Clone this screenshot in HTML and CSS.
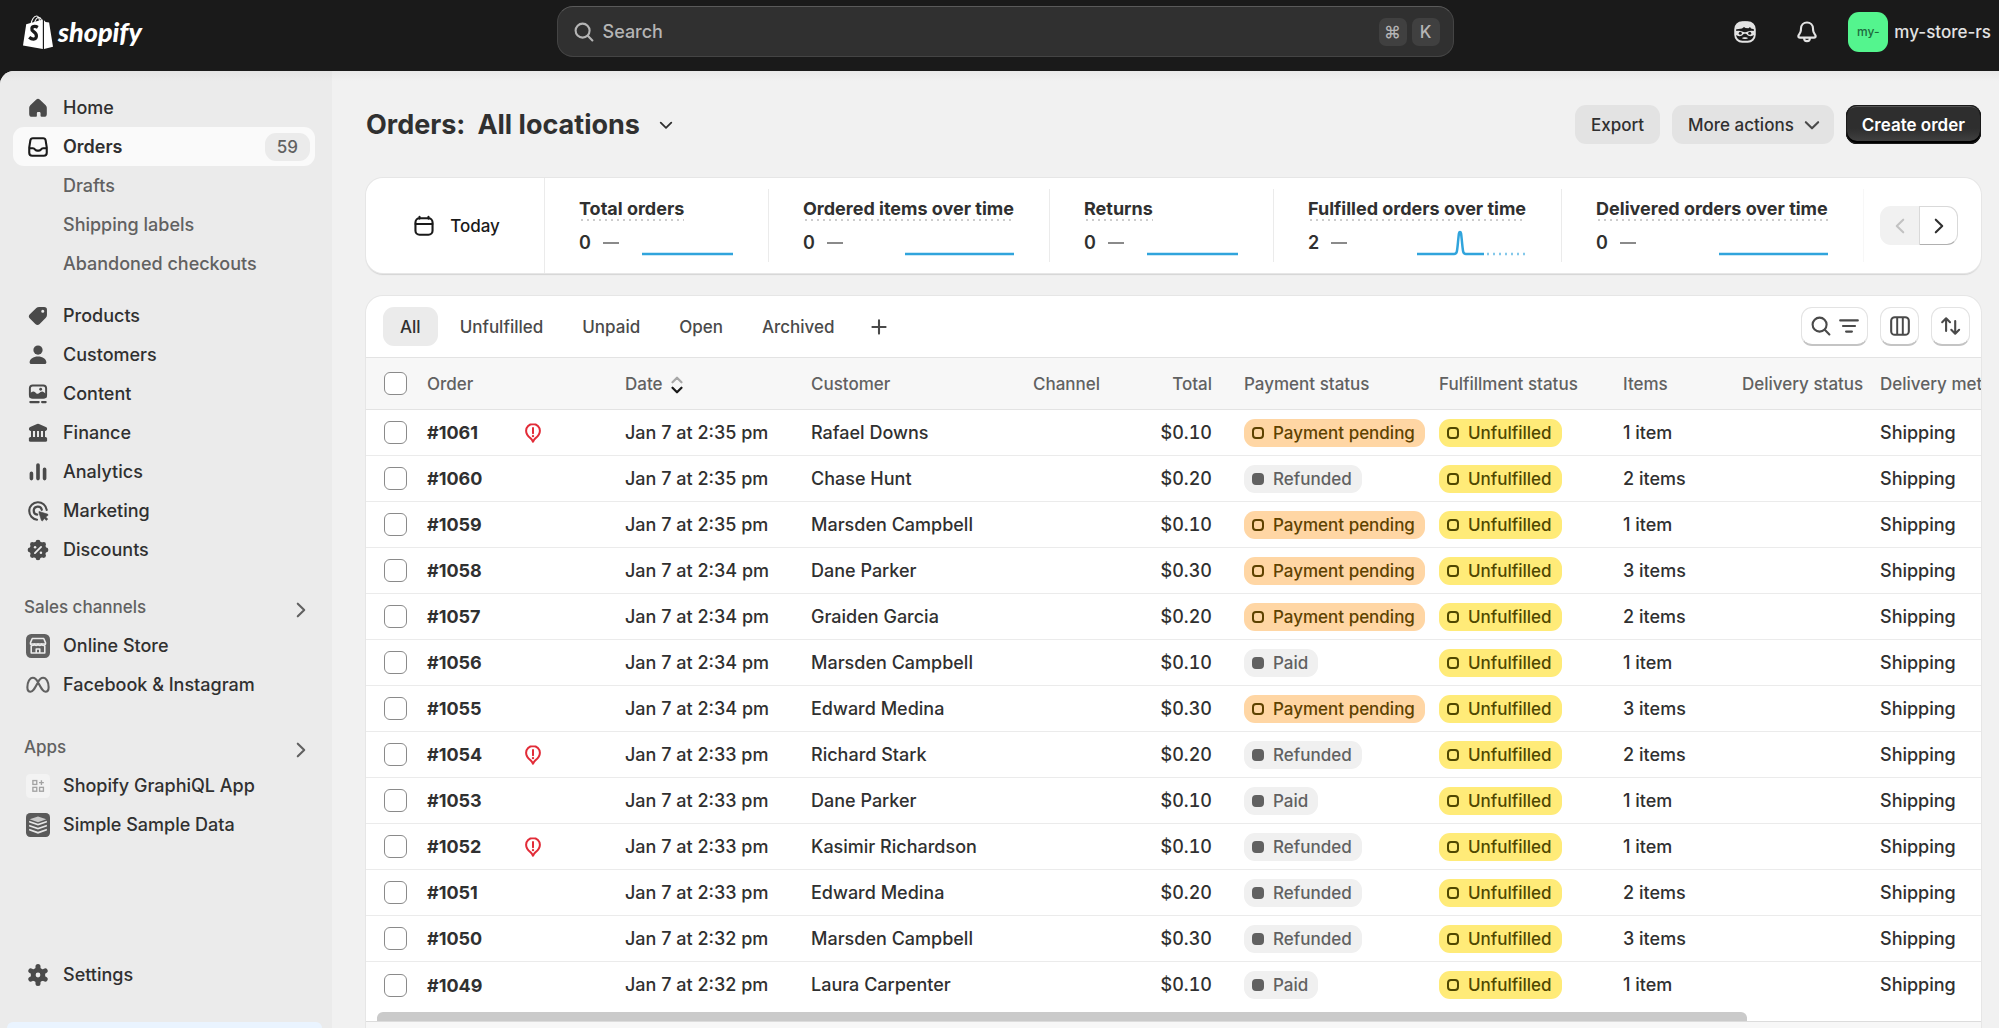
FILE: index.html
```html
<!DOCTYPE html>
<html lang="en">
<head>
<meta charset="utf-8">
<meta name="viewport" content="width=device-width, initial-scale=1">
<title>Orders</title>
<link rel="stylesheet" href="styles.css">
</head>
<body>
<svg class="sprite" aria-hidden="true">
  <symbol id="i-home" viewBox="0 0 20 20"><path d="M8.8 4a1.7 1.7 0 0 1 2.4 0l4.3 4.1c.5.5.8 1.1.8 1.8v4.3a2.1 2.1 0 0 1-2.1 2.1h-1.6a.8.8 0 0 1-.8-.8v-1.9c0-.5-.4-.8-.8-.8h-.9c-.5 0-.9.3-.9.8v1.9c0 .5-.3.8-.8.8H5.8a2.1 2.1 0 0 1-2.1-2.1V9.9c0-.7.3-1.3.8-1.8z" fill="currentColor"/></symbol>
  <symbol id="i-orders" viewBox="0 0 20 20"><path d="M6.4 3.75h7.2c.9 0 1.7.6 1.85 1.5l.8 5v3.9a2.1 2.1 0 0 1-2.1 2.1h-8.3a2.1 2.1 0 0 1-2.1-2.1v-3.9l.8-5c.15-.9.95-1.5 1.85-1.5zM4 10.9h2.4c.7 0 1.1.3 1.4.8.4.6.8.9 1.5.9h1.4c.7 0 1.1-.3 1.5-.9.3-.5.7-.8 1.4-.8H16" fill="none" stroke="currentColor" stroke-width="1.500" stroke-linejoin="round"/></symbol>
  <symbol id="i-tag" viewBox="0 0 20 20"><path fill-rule="evenodd" d="M10.8 3.5h3.6a2 2 0 0 1 2 2v3.7c0 .8-.3 1.5-.8 2l-4.4 4.5a2.2 2.2 0 0 1-3.1 0l-3.9-3.9a2.2 2.2 0 0 1 0-3.1l4.6-4.4c.5-.5 1.2-.8 2-.8zm2.6 2a1.1 1.1 0 1 0 0 2.2 1.1 1.1 0 0 0 0-2.2z" fill="currentColor"/></symbol>
  <symbol id="i-person" viewBox="0 0 20 20"><circle cx="10" cy="6.5" r="3.3" fill="currentColor"/><path d="M4 15.2C4 12.8 6.7 11 10 11s6 1.8 6 4.2c0 .8-.5 1.3-1.2 1.3H5.2c-.7 0-1.2-.5-1.2-1.3z" fill="currentColor"/></symbol>
  <symbol id="i-content" viewBox="0 0 20 20"><rect x="4.2" y="3.9" width="11.6" height="8.8" rx="2" fill="none" stroke="currentColor" stroke-width="1.4"/><path d="M4 10.2c1-1.7 2.6-2.7 4-1.5 1 1 1.5 1.6 2.6.8 1.2-.9 2.2-1.900 3.6-.8l1.800 1.500v2.500H4z" fill="currentColor"/><circle cx="11.9" cy="6.6" r="1" fill="currentColor"/><path d="M4.500 15.800h6M12.900 15.800h2.600" stroke="currentColor" stroke-width="1.500" stroke-linecap="round"/></symbol>
  <symbol id="i-bank" viewBox="0 0 20 20"><path d="M9.300 3.500a1.600 1.600 0 0 1 1.400 0l4.900 2.300c.6.300.9.800.9 1.400 0 .8-.6 1.300-1.300 1.300H4.800c-.7 0-1.300-.5-1.300-1.300 0-.6.300-1.100.9-1.400z" fill="currentColor"/><path d="M5.700 8v5.500M8.600 8v5.500M11.400 8v5.500M14.300 8v5.500" stroke="currentColor" stroke-width="1.400"/><rect x="3.500" y="12.900" width="13" height="3.300" rx="1.100" fill="currentColor"/></symbol>
  <symbol id="i-bars" viewBox="0 0 20 20"><path d="M5.300 11v3.700M10 5v9.700M14.700 8v6.700" stroke="currentColor" stroke-width="2.600" stroke-linecap="round"/></symbol>
  <symbol id="i-target" viewBox="0 0 20 20"><path d="M16.200 9.200a6.250 6.250 0 1 0-6.900 7" fill="none" stroke="currentColor" stroke-width="1.500" stroke-linecap="round"/><path d="M12.700 9.100a2.900 2.900 0 1 0-3.300 3.500" fill="none" stroke="currentColor" stroke-width="1.600" stroke-linecap="round"/><path d="M10.700 10.300l6 1.900c.6.200.6.900.1 1.200l-1.300.8 1.500 1.600-1 1-1.600-1.500-.8 1.400c-.3.500-1 .4-1.200-.1l-1.700-5.300z" fill="currentColor" stroke="currentColor" stroke-width=".4"/></symbol>
  <symbol id="i-discount" viewBox="0 0 20 20"><g fill="currentColor"><circle cx="10" cy="10" r="6"/><circle cx="10" cy="4.300" r="1.700"/><circle cx="10" cy="15.700" r="1.700"/><circle cx="4.300" cy="10" r="1.700"/><circle cx="15.700" cy="10" r="1.700"/><circle cx="6" cy="6" r="1.700"/><circle cx="14" cy="6" r="1.700"/><circle cx="6" cy="14" r="1.700"/><circle cx="14" cy="14" r="1.700"/></g><path d="M12.200 7.800l-4.400 4.400" stroke="#ebebeb" stroke-width="1.300" stroke-linecap="round"/><circle cx="7.900" cy="8.100" r=".9" fill="#ebebeb"/><circle cx="12.100" cy="11.900" r=".9" fill="#ebebeb"/></symbol>
  <symbol id="i-gear" viewBox="0 0 20 20"><circle cx="10" cy="10" r="5.200" fill="currentColor"/><path d="M10 4v12M4.900 7l10.200 6M4.900 13l10.200-6" stroke="currentColor" stroke-width="3.600" stroke-linecap="round"/><circle cx="10" cy="10" r="1.700" fill="#ebebeb"/></symbol>
  <symbol id="i-store" viewBox="0 0 23 23"><rect width="23" height="23" rx="5" fill="#616161"/><g fill="none" stroke="#ebebeb" stroke-width="1.500" stroke-linejoin="round"><path d="M6 4.300h11l1.700 4v1.300H4.300V8.300z"/><path d="M5 11.500v6.700h13v-6.700M9.800 18v-3.700h3.400V18"/><path d="M4.500 9.600c.2 1.900 3.200 1.900 3.500 0 .4 1.900 3.100 1.900 3.500 0 .4 1.900 3.100 1.900 3.500 0 .3 1.900 3.300 1.900 3.500 0"/></g></symbol>
  <symbol id="i-meta" viewBox="0 0 23 23"><path d="M11.500 8.800C10 6 8.600 4.500 6.600 4.500c-3 0-5.300 4.300-5.300 9.100 0 2.800 1.200 4.300 3.100 4.300 2.400 0 3.600-2.500 7.100-9.100 1.300-2.600 2.700-4.300 4.900-4.300 3 0 5.300 4.300 5.300 9.100 0 2.800-1.200 4.300-3.100 4.300-2.400 0-3.600-2.500-7.100-9.100z" fill="none" stroke="#616161" stroke-width="2"/></symbol>
  <symbol id="i-graphiql" viewBox="0 0 23 23"><rect width="23" height="23" rx="4" fill="#f3f3f3"/><g fill="none" stroke="#a3a3a3" stroke-width="1.300"><rect x="6.600" y="6.300" width="3.700" height="3.700"/><rect x="6.600" y="12.800" width="3.700" height="3.700"/><rect x="13" y="12.800" width="3.700" height="3.700"/><path d="M14.800 5.900v4.600M12.500 8.200h4.600"/></g></symbol>
  <symbol id="i-sample" viewBox="0 0 23 23"><rect width="23" height="23" rx="4" fill="#5a5a5a"/><path d="M11.500 3.300l8 2.700-8 2.800-8-2.800z" fill="#c9c9c9"/><path d="M3 7.500l8.500 2.800L20 7.500v1.700L11.500 12 3 9.200zM3 11.300l8.500 2.800 8.500-2.800V13l-8.500 2.800L3 13zM3 15.100l8.500 2.800 8.500-2.800v1.700l-8.500 3L3 16.800z" fill="#e6e6e6"/></symbol>
  <symbol id="i-chev-r" viewBox="0 0 20 20"><path d="M7.700 5.500L12.300 10l-4.600 4.500" fill="none" stroke="currentColor" stroke-width="1.500" stroke-linecap="round" stroke-linejoin="round"/></symbol>
  <symbol id="i-chev-l" viewBox="0 0 20 20"><path d="M12.300 5.500L7.700 10l4.600 4.500" fill="none" stroke="currentColor" stroke-width="1.500" stroke-linecap="round" stroke-linejoin="round"/></symbol>
  <symbol id="i-chev-d" viewBox="0 0 20 20"><path d="M5.600 8l4.400 4.400L14.400 8" fill="none" stroke="currentColor" stroke-width="1.500" stroke-linecap="round" stroke-linejoin="round"/></symbol>
  <symbol id="i-search" viewBox="0 0 20 20"><circle cx="9" cy="9" r="5" fill="none" stroke="currentColor" stroke-width="1.500"/><path d="M12.700 12.700l3.300 3.300" stroke="currentColor" stroke-width="1.500" stroke-linecap="round"/></symbol>
  <symbol id="i-filter" viewBox="0 0 20 20"><path d="M3.700 6h12.600M5.700 10h8.600M7.900 14h4.200" stroke="currentColor" stroke-width="1.500" stroke-linecap="round"/></symbol>
  <symbol id="i-columns" viewBox="0 0 20 20"><rect x="3.700" y="3.700" width="12.600" height="12.600" rx="2.600" fill="none" stroke="currentColor" stroke-width="1.500"/><path d="M8 4v12M12 4v12" stroke="currentColor" stroke-width="1.400"/></symbol>
  <symbol id="i-sort" viewBox="0 0 20 20"><path d="M6.500 13.500V4.700M3.700 7.300l2.800-2.800 2.800 2.800M13 6.500v8.800M10.200 12.700l2.800 2.800 2.800-2.800" fill="none" stroke="currentColor" stroke-width="1.500" stroke-linecap="round" stroke-linejoin="round"/></symbol>
  <symbol id="i-plus" viewBox="0 0 20 20"><path d="M10 5.300v9.400M5.300 10h9.400" stroke="currentColor" stroke-width="1.500" stroke-linecap="round"/></symbol>
  <symbol id="i-calendar" viewBox="0 0 20 20"><rect x="3.900" y="4.500" width="12.200" height="11.800" rx="2.900" fill="none" stroke="currentColor" stroke-width="1.500"/><path d="M4 8.600h12M6.800 3.400v1.300M13.200 3.400v1.300" stroke="currentColor" stroke-width="1.500" stroke-linecap="round"/></symbol>
  <symbol id="i-bell" viewBox="0 0 20 20"><path d="M10 3.200c-2.500 0-4.200 1.900-4.300 4.300l-.1 1.600c-.1.900-.4 1.500-1 2.300-.7 1-.8 1.100-.8 1.500 0 .7.500 1.100 1.200 1.100h10c.7 0 1.200-.4 1.200-1.100 0-.4-.1-.5-.8-1.500-.6-.8-.9-1.400-1-2.300l-.1-1.600c-.1-2.400-1.800-4.300-4.300-4.300zM7.900 14.200c0 1.300.8 2.300 2.100 2.300s2.100-1 2.100-2.300" fill="none" stroke="currentColor" stroke-width="1.500" stroke-linejoin="round"/></symbol>
  <symbol id="i-sidekick" viewBox="0 0 22 22"><rect x="1.200" y="1.200" width="19.600" height="19.600" rx="7" fill="none" stroke="currentColor" stroke-width="1.900"/><path d="M1 8.500C1.500 3.500 5.500.5 11 .5s9.500 3 10 8l-4-1-1-1.500-1.500 1.300-3-.2-1.500-1L8 7.500z" fill="currentColor"/><path d="M1.500 10l3-.2c3 0 4.500 1.400 6.500 1.400s3.500-1.400 6.500-1.400l3 .2v3.300c-1 2.200-6.200 2.600-7.500.3-.7-1.200-3.300-1.200-4 0-1.300 2.300-6.500 1.900-7.500-.3z" fill="currentColor"/><circle cx="6.300" cy="12.300" r="1.500" fill="#1a1a1a"/><circle cx="15.700" cy="12.300" r="1.500" fill="#1a1a1a"/><path d="M8 17.300c.8-1.300 5.200-1.300 6 0-.9 1-5.100 1-6 0z" fill="currentColor"/></symbol>
  <symbol id="i-risk" viewBox="0 0 16 20"><path d="M8 1C4.200 1 1.100 3.900 1.100 7.800c0 3.300 1.800 5.600 4.600 7.600.9.700 1.600 1.900 2.300 3.300.7-1.400 1.400-2.600 2.300-3.300 2.800-2 4.600-4.300 4.600-7.600C14.900 3.900 11.800 1 8 1z" fill="none" stroke="currentColor" stroke-width="2" stroke-linejoin="round"/><path d="M8 5v5.200" stroke="currentColor" stroke-width="2" stroke-linecap="round"/><circle cx="8" cy="13.100" r="1.200" fill="currentColor"/></symbol>
</svg>

<header class="topbar">
  <a class="brand" href="#" aria-label="Shopify">
    <svg class="brand-bag" viewBox="0 0 30 34" aria-hidden="true"><path d="M8 9c.6-4 3-8 5.500-8 2 0 3 2 3 6.500M11.500 8c.8-3 2.500-5.500 4.500-5.500 1.500 0 2.300 1.500 2.700 4" fill="none" stroke="#fff" stroke-width="1.100"/><path d="M3.200 9.200L19.800 4.500V34L0 30.500z" fill="#fff"/><path d="M21 5.200l1.600 1.700 3.500.5L30 31.800l-9 2.200z" fill="#fff"/><path d="M14.800 12.300c-1-.6-2-.9-3-.9-3.600 0-3.700 3.500-1.500 5 2.300 1.500 3.400 2.400 3.100 5-.4 3.500-4.500 3.300-7.200.9" fill="none" stroke="#1a1a1a" stroke-width="3.200"/></svg>
    <span class="brand-word">shopify</span>
  </a>
  <label class="search">
    <svg class="icon"><use href="#i-search"/></svg>
    <input class="search-input" type="search" placeholder="Search" aria-label="Search">
    <kbd class="key">⌘</kbd><kbd class="key">K</kbd>
  </label>
  <div class="account">
    <button class="bar-btn" type="button" aria-label="Sidekick"><svg class="icon-face"><use href="#i-sidekick"/></svg></button>
    <button class="bar-btn bar-btn-bell" type="button" aria-label="Notifications"><svg class="icon"><use href="#i-bell"/></svg></button>
    <button class="store" type="button"><span class="avatar">my-</span><span>my-store-rs</span></button>
  </div>
</header>

<div class="shell">
  <nav class="sidebar" aria-label="Main">
    <ul class="nav">
      <li><a class="nav-item" href="#"><svg class="icon"><use href="#i-home"/></svg>Home</a></li>
      <li><a class="nav-item is-active" href="#" aria-current="page"><svg class="icon"><use href="#i-orders"/></svg>Orders<span class="count">59</span></a></li>
      <li><a class="nav-item nav-sub" href="#">Drafts</a></li>
      <li><a class="nav-item nav-sub" href="#">Shipping labels</a></li>
      <li><a class="nav-item nav-sub" href="#">Abandoned checkouts</a></li>
    </ul>
    <ul class="nav nav-more">
      <li><a class="nav-item" href="#"><svg class="icon"><use href="#i-tag"/></svg>Products</a></li>
      <li><a class="nav-item" href="#"><svg class="icon"><use href="#i-person"/></svg>Customers</a></li>
      <li><a class="nav-item" href="#"><svg class="icon"><use href="#i-content"/></svg>Content</a></li>
      <li><a class="nav-item" href="#"><svg class="icon"><use href="#i-bank"/></svg>Finance</a></li>
      <li><a class="nav-item" href="#"><svg class="icon"><use href="#i-bars"/></svg>Analytics</a></li>
      <li><a class="nav-item" href="#"><svg class="icon"><use href="#i-target"/></svg>Marketing</a></li>
      <li><a class="nav-item" href="#"><svg class="icon"><use href="#i-discount"/></svg>Discounts</a></li>
    </ul>
    <section class="group">
      <button class="group-title" type="button">Sales channels<svg class="icon"><use href="#i-chev-r"/></svg></button>
      <ul class="nav">
        <li><a class="nav-item" href="#"><svg class="icon-app"><use href="#i-store"/></svg>Online Store</a></li>
        <li><a class="nav-item" href="#"><svg class="icon-app"><use href="#i-meta"/></svg>Facebook &amp; Instagram</a></li>
      </ul>
    </section>
    <section class="group">
      <button class="group-title" type="button">Apps<svg class="icon"><use href="#i-chev-r"/></svg></button>
      <ul class="nav">
        <li><a class="nav-item" href="#"><svg class="icon-app"><use href="#i-graphiql"/></svg>Shopify GraphiQL App</a></li>
        <li><a class="nav-item" href="#"><svg class="icon-app"><use href="#i-sample"/></svg>Simple Sample Data</a></li>
      </ul>
    </section>
    <div class="sidebar-end">
      <a class="nav-item" href="#"><svg class="icon"><use href="#i-gear"/></svg>Settings</a>
      <div class="notice"></div>
    </div>
  </nav>

  <main class="main">
    <div class="page-head">
      <h1 class="title">Orders:</h1>
      <button class="location" type="button">All locations<svg class="icon-sm"><use href="#i-chev-d"/></svg></button>
      <div class="actions">
        <button class="btn" type="button">Export</button>
        <button class="btn btn-menu" type="button">More actions<svg class="icon"><use href="#i-chev-d"/></svg></button>
        <button class="btn btn-primary" type="button">Create order</button>
      </div>
    </div>

    <section class="card metrics" aria-label="Metrics">
      <button class="today" type="button"><svg class="icon"><use href="#i-calendar"/></svg>Today</button>
      <div class="metric"><h2 class="metric-name">Total orders</h2><div class="metric-row"><span>0</span><span class="dash"></span><svg class="spark" viewBox="0 0 91 26"><path d="M0 24h91"/></svg></div></div>
      <div class="metric"><h2 class="metric-name">Ordered items over time</h2><div class="metric-row"><span>0</span><span class="dash"></span><svg class="spark spark-wide" viewBox="0 0 109 26"><path d="M0 24h109"/></svg></div></div>
      <div class="metric"><h2 class="metric-name">Returns</h2><div class="metric-row"><span>0</span><span class="dash"></span><svg class="spark" viewBox="0 0 91 26"><path d="M0 24h91"/></svg></div></div>
      <div class="metric"><h2 class="metric-name">Fulfilled orders over time</h2><div class="metric-row"><span>2</span><span class="dash"></span><svg class="spark spark-wide" viewBox="0 0 109 26"><path d="M0 24h37c3 0 3-2 4-12s1-10 2-10 1 0 2 10 1 12 4 12h18"/><path class="spark-dots" d="M70 24h39"/></svg></div></div>
      <div class="metric metric-last"><h2 class="metric-name">Delivered orders over time</h2><div class="metric-row"><span>0</span><span class="dash"></span><svg class="spark spark-wide" viewBox="0 0 109 26"><path d="M0 24h109"/></svg></div></div>
      <div class="pager">
        <button class="pager-btn" type="button" disabled aria-label="Previous"><svg class="icon"><use href="#i-chev-l"/></svg></button>
        <button class="pager-btn pager-next" type="button" aria-label="Next"><svg class="icon"><use href="#i-chev-r"/></svg></button>
      </div>
    </section>

    <section class="card orders" aria-label="Orders">
      <div class="toolbar">
        <div class="tabs" role="tablist">
          <button class="tab is-on" type="button" role="tab" aria-selected="true">All</button>
          <button class="tab" type="button" role="tab">Unfulfilled</button>
          <button class="tab" type="button" role="tab">Unpaid</button>
          <button class="tab" type="button" role="tab">Open</button>
          <button class="tab" type="button" role="tab">Archived</button>
          <button class="tab tab-add" type="button" aria-label="Add view"><svg class="icon"><use href="#i-plus"/></svg></button>
        </div>
        <div class="tools">
          <button class="tool tool-wide" type="button" aria-label="Search and filter"><svg class="icon"><use href="#i-search"/></svg><svg class="icon"><use href="#i-filter"/></svg></button>
          <button class="tool" type="button" aria-label="Edit columns"><svg class="icon"><use href="#i-columns"/></svg></button>
          <button class="tool" type="button" aria-label="Sort"><svg class="icon"><use href="#i-sort"/></svg></button>
        </div>
      </div>
      <div class="scroller">
        <table class="table">
          <colgroup><col class="c-check"><col class="c-order"><col class="c-date"><col class="c-customer"><col class="c-channel"><col class="c-total"><col class="c-payment"><col class="c-fulfil"><col class="c-items"><col class="c-status"><col class="c-method"></colgroup>
          <thead><tr><th class="check"><input type="checkbox" aria-label="Select all orders"></th><th>Order</th><th>Date<svg class="sorter" viewBox="0 0 12 16" aria-hidden="true"><path d="M2 5.500l4-4 4 4" stroke="#a8a8a8"/><path d="M2 10.500l4 4 4-4" stroke="#1a1a1a"/></svg></th><th>Customer</th><th>Channel</th><th class="num">Total</th><th>Payment status</th><th>Fulfillment status</th><th>Items</th><th>Delivery status</th><th>Delivery method</th></tr></thead>
          <tbody>
            <tr><td class="check"><input type="checkbox" aria-label="Select #1061"></td><td><a class="order" href="#">#1061</a><svg class="risk" role="img" aria-label="High risk"><use href="#i-risk"/></svg></td><td>Jan 7 at 2:35 pm</td><td>Rafael Downs</td><td></td><td class="num">$0.10</td><td><span class="badge pending">Payment pending</span></td><td><span class="badge open">Unfulfilled</span></td><td>1 item</td><td></td><td>Shipping</td></tr>
            <tr><td class="check"><input type="checkbox" aria-label="Select #1060"></td><td><a class="order" href="#">#1060</a></td><td>Jan 7 at 2:35 pm</td><td>Chase Hunt</td><td></td><td class="num">$0.20</td><td><span class="badge done">Refunded</span></td><td><span class="badge open">Unfulfilled</span></td><td>2 items</td><td></td><td>Shipping</td></tr>
            <tr><td class="check"><input type="checkbox" aria-label="Select #1059"></td><td><a class="order" href="#">#1059</a></td><td>Jan 7 at 2:35 pm</td><td>Marsden Campbell</td><td></td><td class="num">$0.10</td><td><span class="badge pending">Payment pending</span></td><td><span class="badge open">Unfulfilled</span></td><td>1 item</td><td></td><td>Shipping</td></tr>
            <tr><td class="check"><input type="checkbox" aria-label="Select #1058"></td><td><a class="order" href="#">#1058</a></td><td>Jan 7 at 2:34 pm</td><td>Dane Parker</td><td></td><td class="num">$0.30</td><td><span class="badge pending">Payment pending</span></td><td><span class="badge open">Unfulfilled</span></td><td>3 items</td><td></td><td>Shipping</td></tr>
            <tr><td class="check"><input type="checkbox" aria-label="Select #1057"></td><td><a class="order" href="#">#1057</a></td><td>Jan 7 at 2:34 pm</td><td>Graiden Garcia</td><td></td><td class="num">$0.20</td><td><span class="badge pending">Payment pending</span></td><td><span class="badge open">Unfulfilled</span></td><td>2 items</td><td></td><td>Shipping</td></tr>
            <tr><td class="check"><input type="checkbox" aria-label="Select #1056"></td><td><a class="order" href="#">#1056</a></td><td>Jan 7 at 2:34 pm</td><td>Marsden Campbell</td><td></td><td class="num">$0.10</td><td><span class="badge done">Paid</span></td><td><span class="badge open">Unfulfilled</span></td><td>1 item</td><td></td><td>Shipping</td></tr>
            <tr><td class="check"><input type="checkbox" aria-label="Select #1055"></td><td><a class="order" href="#">#1055</a></td><td>Jan 7 at 2:34 pm</td><td>Edward Medina</td><td></td><td class="num">$0.30</td><td><span class="badge pending">Payment pending</span></td><td><span class="badge open">Unfulfilled</span></td><td>3 items</td><td></td><td>Shipping</td></tr>
            <tr><td class="check"><input type="checkbox" aria-label="Select #1054"></td><td><a class="order" href="#">#1054</a><svg class="risk" role="img" aria-label="High risk"><use href="#i-risk"/></svg></td><td>Jan 7 at 2:33 pm</td><td>Richard Stark</td><td></td><td class="num">$0.20</td><td><span class="badge done">Refunded</span></td><td><span class="badge open">Unfulfilled</span></td><td>2 items</td><td></td><td>Shipping</td></tr>
            <tr><td class="check"><input type="checkbox" aria-label="Select #1053"></td><td><a class="order" href="#">#1053</a></td><td>Jan 7 at 2:33 pm</td><td>Dane Parker</td><td></td><td class="num">$0.10</td><td><span class="badge done">Paid</span></td><td><span class="badge open">Unfulfilled</span></td><td>1 item</td><td></td><td>Shipping</td></tr>
            <tr><td class="check"><input type="checkbox" aria-label="Select #1052"></td><td><a class="order" href="#">#1052</a><svg class="risk" role="img" aria-label="High risk"><use href="#i-risk"/></svg></td><td>Jan 7 at 2:33 pm</td><td>Kasimir Richardson</td><td></td><td class="num">$0.10</td><td><span class="badge done">Refunded</span></td><td><span class="badge open">Unfulfilled</span></td><td>1 item</td><td></td><td>Shipping</td></tr>
            <tr><td class="check"><input type="checkbox" aria-label="Select #1051"></td><td><a class="order" href="#">#1051</a></td><td>Jan 7 at 2:33 pm</td><td>Edward Medina</td><td></td><td class="num">$0.20</td><td><span class="badge done">Refunded</span></td><td><span class="badge open">Unfulfilled</span></td><td>2 items</td><td></td><td>Shipping</td></tr>
            <tr><td class="check"><input type="checkbox" aria-label="Select #1050"></td><td><a class="order" href="#">#1050</a></td><td>Jan 7 at 2:32 pm</td><td>Marsden Campbell</td><td></td><td class="num">$0.30</td><td><span class="badge done">Refunded</span></td><td><span class="badge open">Unfulfilled</span></td><td>3 items</td><td></td><td>Shipping</td></tr>
            <tr><td class="check"><input type="checkbox" aria-label="Select #1049"></td><td><a class="order" href="#">#1049</a></td><td>Jan 7 at 2:32 pm</td><td>Laura Carpenter</td><td></td><td class="num">$0.10</td><td><span class="badge done">Paid</span></td><td><span class="badge open">Unfulfilled</span></td><td>1 item</td><td></td><td>Shipping</td></tr>
          </tbody>
        </table>
      </div>
      <div class="track"><div class="thumb"></div></div>
      <div class="card-foot"></div>
    </section>
  </main>
</div>
</body>
</html>
```
FILE: styles.css
```css
*, ::before { box-sizing: border-box; }

body {
  margin: 0;
  height: 100vh;
  display: flex;
  flex-direction: column;
  overflow: hidden;
  background: #1a1a1a;
  color: #303030;
  font: 450 18px/24px Inter, "Liberation Sans", sans-serif;
}

button, input { font: inherit; color: inherit; }
button { padding: 0; border: 0; background: none; white-space: nowrap; cursor: pointer; }
a { color: inherit; text-decoration: none; }
ul { list-style: none; margin: 0; padding: 0; }
h1, h2 { margin: 0; }

.sprite { display: none; }
.icon { width: 28px; height: 28px; flex: none; }
.icon-sm { width: 24px; height: 24px; flex: none; }
.icon-app { width: 24px; height: 24px; margin: 0 2px; flex: none; }
.icon-face { width: 22px; height: 22px; flex: none; }

/* Top bar */
.topbar {
  flex: none;
  height: 71px;
  padding: 6px 8px 14px 19px;
  display: grid;
  grid-template-columns: 1fr minmax(0, 897px) 1fr;
  align-items: center;
  color: #e3e3e3;
}
.brand { display: flex; align-items: center; gap: 5px; padding-left: 4px; color: #fff; }
.brand-bag { width: 30px; height: 34px; }
.brand-word { font: italic 900 27px/34px Lato, "Open Sans", sans-serif; }
.search {
  height: 51px;
  padding: 0 13px 0 12px;
  display: flex;
  align-items: center;
  gap: 5px;
  border: 1px solid #444;
  border-top-color: #5a5a5a;
  border-radius: 16px;
  background: #303030;
  color: #b5b5b5;
}
.search-input {
  flex: 1;
  min-width: 0;
  padding: 0;
  border: 0;
  outline: 0;
  background: none;
}
.search-input::placeholder { color: #b5b5b5; opacity: 1; }
.key {
  width: 28px;
  height: 28px;
  border-radius: 7px;
  background: #404040;
  font: 500 17px/28px Inter, "DejaVu Sans", sans-serif;
  text-align: center;
}
.account { display: flex; align-items: center; justify-content: flex-end; }
.bar-btn { display: flex; padding: 3px; }
.bar-btn-bell { margin: 0 24px 0 31px; }
.store { display: flex; align-items: center; gap: 6px; font-size: 17px; }
.avatar {
  width: 40px;
  height: 40px;
  border-radius: 11px;
  background: #54f58e;
  color: #1d6b3d;
  font-size: 12px;
  line-height: 40px;
  text-align: center;
}

/* Shell */
.shell {
  flex: 1;
  min-height: 0;
  display: flex;
  border-radius: 14px 0 0 0;
  overflow: hidden;
  background: #f1f1f1;
}
.sidebar {
  flex: none;
  width: 332px;
  padding: 17px 17px 0 13px;
  display: flex;
  flex-direction: column;
  background: linear-gradient(#e4e4e4, #ebebeb 10px);
}
.nav-item {
  height: 39px;
  padding: 0 5px 0 11px;
  display: flex;
  align-items: center;
  gap: 11px;
  border-radius: 11px;
  font-weight: 550;
}
.nav-item .icon { color: #4a4a4a; }
.nav-item.is-active { background: #fafafa; font-weight: 600; }
.nav-item.is-active .icon { color: #1a1a1a; }
.nav-item.nav-sub { padding-left: 50px; color: #616161; font-weight: 450; }
.count {
  margin-left: auto;
  padding: 0 12px;
  border-radius: 11px;
  background: #ebebeb;
  color: #616161;
  font-size: 17px;
  font-weight: 550;
  line-height: 28px;
}
.nav-more { margin-top: 13px; }
.group { margin-top: 18px; }
.group + .group { margin-top: 23px; }
.group-title {
  width: 100%;
  height: 39px;
  padding: 0 0 0 11px;
  display: flex;
  align-items: center;
  justify-content: space-between;
  color: #616161;
  font-size: 17px;
  font-weight: 550;
}
.group-title .icon { margin-top: 6px; }
.sidebar-end { margin-top: auto; }
.notice { height: 6px; margin: 28px -7px 0 -6px; border-radius: 11px 11px 0 0; background: #eaf4ff; }

.main {
  flex: 1;
  min-width: 0;
  padding: 34px 18px 0 34px;
  background: linear-gradient(#e9e9e9, #f1f1f1 10px);
}
.page-head { display: flex; align-items: center; height: 39px; }
.title, .location { font-size: 27px; font-weight: 650; line-height: 39px; }
.location { margin-left: 12px; display: flex; align-items: center; gap: 14px; }
.actions { margin-left: auto; display: flex; gap: 12px; }
.btn {
  height: 39px;
  padding: 0 16px;
  border-radius: 11px;
  background: #e3e3e3;
  font-size: 17px;
  font-weight: 550;
}
.btn-menu { display: flex; align-items: center; gap: 4px; padding-right: 8px; }
.btn-menu .icon { color: #4a4a4a; }
.btn-primary {
  background: linear-gradient(#2e2e2e 60%, #444);
  color: #fff;
  font-weight: 600;
  box-shadow: inset 0 0 0 1px #1a1a1a, inset 0 3px 0 -1px #555, inset 0 -2px 0 1px #000;
}

.card {
  border-radius: 17px;
  background: #fff;
  box-shadow: 0 0 0 1px #e6e6e6, 0 2px 1px #d4d4d4;
}

/* Metrics */
.metrics { margin-top: 34px; height: 95px; display: flex; align-items: center; overflow: hidden; }
.today {
  align-self: stretch;
  width: 179px;
  flex: none;
  display: flex;
  align-items: center;
  justify-content: center;
  gap: 12px;
  border-right: 1px solid #ebebeb;
  color: #1a1a1a;
  font-size: 17px;
  font-weight: 500;
}
.metric {
  flex: none;
  height: 73px;
  padding: 8px 35px 0 34px;
  border-right: 1px solid #ebebeb;
  font-weight: 600;
}
.metric-last { border-color: #f7f7f7; }
.metric-name {
  width: fit-content;
  font-size: 18px;
  font-weight: 650;
  line-height: 24px;
  background: radial-gradient(circle, #ccc 1px, transparent 1px) 0 100% / 6px 2px repeat-x;
}
.metric-row { min-width: 154px; height: 35px; padding-top: 8px; display: flex; align-items: center; gap: 12px; line-height: 24px; }
.dash { width: 16px; height: 2px; background: #8a8a8a; }
.spark {
  width: 91px;
  height: 26px;
  margin-left: auto;
  fill: none;
  stroke: #30a4dc;
  stroke-width: 2.500;
}
.spark-wide { width: 109px; }
.spark-dots { stroke-dasharray: 2 4; opacity: .6; }
.pager { margin: 0 23px 0 auto; display: flex; flex: none; }
.pager-btn {
  width: 39px;
  height: 39px;
  display: flex;
  align-items: center;
  justify-content: center;
  border-radius: 11px 0 0 11px;
  background: #f1f1f1;
  color: #c2c2c2;
}
.pager-next {
  border: 1px solid #d9d9d9;
  border-bottom-color: #b0b0b0;
  border-radius: 0 11px 11px 0;
  background: #fff;
  color: #303030;
}

/* Orders table */
.orders { margin-top: 23px; overflow: hidden; }
.toolbar {
  height: 62px;
  padding: 0 11px 0 17px;
  display: flex;
  align-items: center;
  justify-content: space-between;
  border-bottom: 1px solid #e3e3e3;
}
.tabs, .tools { display: flex; align-items: center; }
.tabs { gap: 5px; }
.tools { gap: 12px; }
.tab {
  height: 39px;
  padding: 0 17px;
  border-radius: 11px;
  color: #4a4a4a;
  font-size: 17px;
  font-weight: 550;
}
.tab.is-on { background: #ebebeb; color: #303030; }
.tab-add { display: flex; align-items: center; padding: 0 8px; }
.tool {
  height: 39px;
  width: 39px;
  display: flex;
  align-items: center;
  justify-content: center;
  border: 1px solid #e3e3e3;
  border-bottom: 2px solid #c4c4c4;
  border-radius: 11px;
  color: #4a4a4a;
}
.tool-wide { width: 67px; }
.scroller { overflow-x: auto; scrollbar-width: none; }
.table { width: 1875px; table-layout: fixed; border-collapse: separate; border-spacing: 0; }
.c-check { width: 53px; }
.c-order { width: 198px; }
.c-date { width: 186px; }
.c-customer { width: 222px; }
.c-channel { width: 82px; }
.c-total { width: 129px; }
.c-payment { width: 195px; }
.c-fulfil { width: 184px; }
.c-items { width: 119px; }
.c-status { width: 138px; }
.c-method { width: 369px; }
th, td { padding: 0 8px; text-align: left; white-space: nowrap; vertical-align: middle; }
th {
  height: 52px;
  border-bottom: 1px solid #e3e3e3;
  background: #f7f7f7;
  color: #616161;
  font-size: 17px;
  font-weight: 550;
}
td { height: 46px; border-bottom: 1px solid #ebebeb; }
tbody tr:last-child td { border-bottom: 0; }
.num { padding-right: 24px; text-align: right; font-variant-numeric: tabular-nums; }
.check { padding: 0 0 0 18px; }
.check input {
  appearance: none;
  display: block;
  width: 23px;
  height: 23px;
  margin: 0;
  border: 1px solid #8a8a8a;
  border-radius: 6px;
  background: #fff;
}
.sorter {
  width: 14px;
  height: 18px;
  margin-left: 7px;
  vertical-align: middle;
  fill: none;
  stroke-width: 2;
  stroke-linecap: round;
  stroke-linejoin: round;
}
.order { display: inline-block; width: 98px; font-weight: 650; vertical-align: middle; }
.risk { width: 16px; height: 20px; vertical-align: middle; color: #e22c38; }
.badge {
  height: 28px;
  padding: 0 10px 0 8px;
  display: inline-flex;
  align-items: center;
  gap: 9px;
  border-radius: 11px;
  font-size: 17px;
  font-weight: 500;
  vertical-align: middle;
}
.badge::before {
  content: "";
  width: 12px;
  height: 12px;
  border: 2px solid;
  border-radius: 4px;
}
.pending { background: #ffd6a4; color: #5e4200; }
.open { background: #ffeb78; color: #4f4700; }
.done { background: #f0f0f0; color: #616161; }
.done::before { background: currentColor; }
.track { padding: 4px 11px 0; }
.thumb { width: 86%; height: 9px; border-radius: 6px 6px 0 0; background: #cacaca; }
.card-foot { height: 56px; border-top: 1px solid #dcdcdc; background: #f7f7f7; }
```
